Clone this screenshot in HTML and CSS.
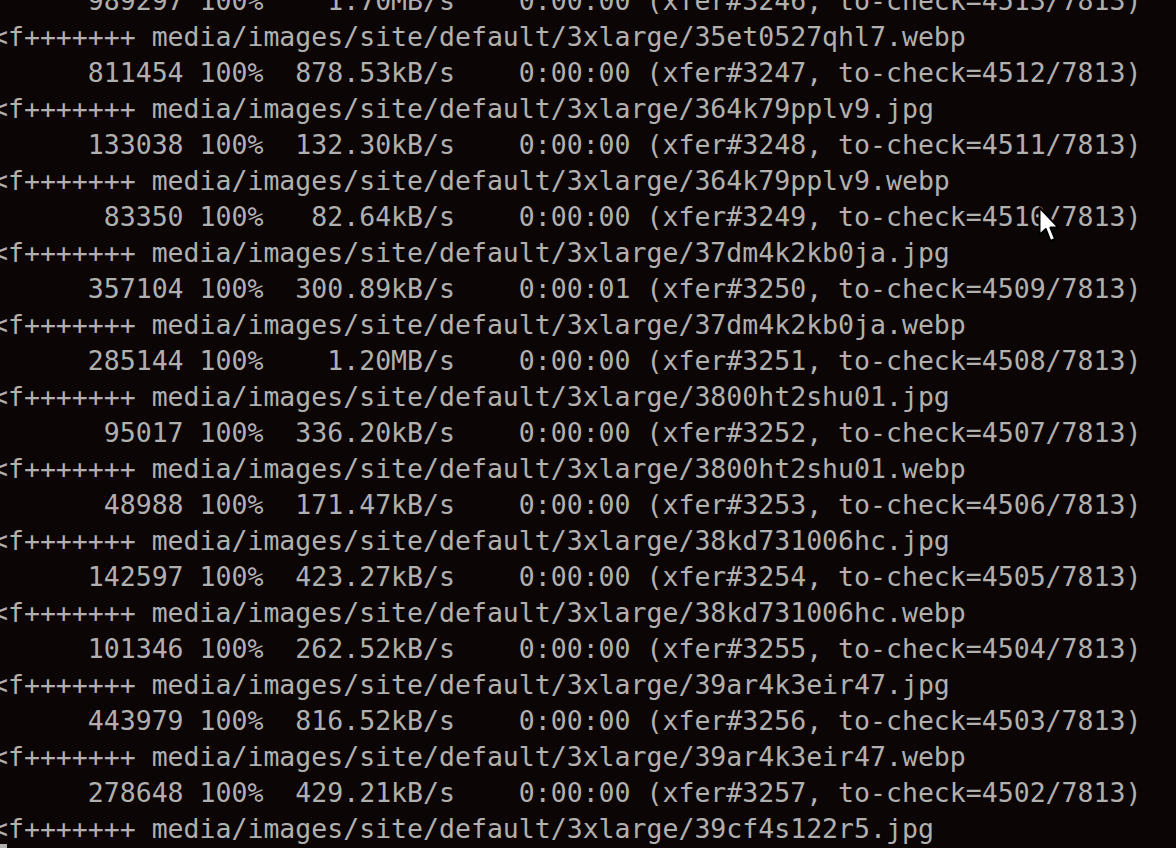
FILE: index.html
```html
<!DOCTYPE html>
<html>
<head>
<meta charset="utf-8">
<link rel="stylesheet" href="styles.css">
</head>
<body>
<pre class="term">      989297 100%    1.70MB/s    0:00:00 (xfer#3246, to-check=4513/7813)
&lt;f+++++++ media/images/site/default/3xlarge/35et0527qhl7.webp
      811454 100%  878.53kB/s    0:00:00 (xfer#3247, to-check=4512/7813)
&lt;f+++++++ media/images/site/default/3xlarge/364k79pplv9.jpg
      133038 100%  132.30kB/s    0:00:00 (xfer#3248, to-check=4511/7813)
&lt;f+++++++ media/images/site/default/3xlarge/364k79pplv9.webp
       83350 100%   82.64kB/s    0:00:00 (xfer#3249, to-check=4510/7813)
&lt;f+++++++ media/images/site/default/3xlarge/37dm4k2kb0ja.jpg
      357104 100%  300.89kB/s    0:00:01 (xfer#3250, to-check=4509/7813)
&lt;f+++++++ media/images/site/default/3xlarge/37dm4k2kb0ja.webp
      285144 100%    1.20MB/s    0:00:00 (xfer#3251, to-check=4508/7813)
&lt;f+++++++ media/images/site/default/3xlarge/3800ht2shu01.jpg
       95017 100%  336.20kB/s    0:00:00 (xfer#3252, to-check=4507/7813)
&lt;f+++++++ media/images/site/default/3xlarge/3800ht2shu01.webp
       48988 100%  171.47kB/s    0:00:00 (xfer#3253, to-check=4506/7813)
&lt;f+++++++ media/images/site/default/3xlarge/38kd731006hc.jpg
      142597 100%  423.27kB/s    0:00:00 (xfer#3254, to-check=4505/7813)
&lt;f+++++++ media/images/site/default/3xlarge/38kd731006hc.webp
      101346 100%  262.52kB/s    0:00:00 (xfer#3255, to-check=4504/7813)
&lt;f+++++++ media/images/site/default/3xlarge/39ar4k3eir47.jpg
      443979 100%  816.52kB/s    0:00:00 (xfer#3256, to-check=4503/7813)
&lt;f+++++++ media/images/site/default/3xlarge/39ar4k3eir47.webp
      278648 100%  429.21kB/s    0:00:00 (xfer#3257, to-check=4502/7813)
&lt;f+++++++ media/images/site/default/3xlarge/39cf4s122r5.jpg
<span class="cursor"></span></pre>
<svg class="pointer" width="24" height="38" viewBox="0 0 24 38">
  <path d="M1.5 1.5 L1.5 29 L7.8 23 L12.5 35 L17 33 L12.4 21.6 L20.5 21.6 Z" fill="#ffffff" stroke="#000000" stroke-width="2" stroke-linejoin="round"/>
</svg>
</body>
</html>
```
FILE: styles.css
```css
html, body {
  margin: 0;
  padding: 0;
  background: #0b0506;
  overflow: hidden;
  width: 1176px;
  height: 848px;
}

.term {
  margin: -17px 0 0 -8px;
  font-family: "DejaVu Sans Mono", "Liberation Mono", monospace;
  font-size: 26.53px;
  line-height: 36px;
  color: #b2b0ae;
  white-space: pre;
}

.cursor {
  display: inline-block;
  width: 15px;
  height: 30px;
  background: #b2b0ae;
  vertical-align: top;
  margin-top: -3px;
}

.pointer {
  position: absolute;
  left: 1038px;
  top: 206px;
}
```
